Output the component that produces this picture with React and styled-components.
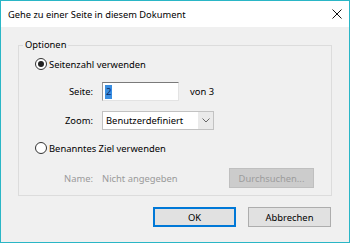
import React from "react";
import styled, { createGlobalStyle } from "styled-components";

const Global = createGlobalStyle`
  html, body {
    margin: 0;
    padding: 0;
    background: #f0f0f0;
  }
  * {
    box-sizing: border-box;
  }
`;

const Dialog = styled.div`
  width: 350px;
  height: 243px;
  border: 1px solid #2ab6c6;
  background: #f0f0f0;
  font-family: "Noto Sans", Lato, sans-serif;
  font-size: 9.4px;
  color: #000;
  display: flex;
  flex-direction: column;
`;

const TitleBar = styled.div`
  height: 26px;
  background: #fff;
  display: flex;
  align-items: center;
  justify-content: space-between;
  padding: 0 7px 0 7px;
  font-size: 9.3px;
`;

const Body = styled.div`
  padding: 11px 17px 0 17px;
  display: flex;
  flex-direction: column;
`;

const Group = styled.fieldset`
  margin: 0;
  border: 1px solid #dcdcdc;
  padding: 4px 0 7px 16px;
`;

const Legend = styled.legend`
  padding: 0 2px;
  margin-left: -12px;
  line-height: 14px;
`;

const RadioRow = styled.label`
  display: flex;
  align-items: center;
  height: 16px;
  margin-top: ${(p) => p.$top || 0}px;
  gap: 2px;
`;

const RadioCircle = styled.span`
  width: 12px;
  height: 12px;
  border-radius: 50%;
  border: 1px solid #333;
  background: #fff;
  display: flex;
  align-items: center;
  justify-content: center;

  &::after {
    content: "";
    width: 6px;
    height: 6px;
    border-radius: 50%;
    background: ${(p) => (p.$checked ? "#222" : "transparent")};
  }
`;

const FieldRow = styled.div`
  display: grid;
  grid-template-columns: 58px max-content max-content;
  justify-content: start;
  align-items: center;
  column-gap: 9px;
  margin-top: ${(p) => p.$top || 0}px;
`;

const FieldLabel = styled.span`
  text-align: right;
`;

const TextBox = styled.div`
  width: 77px;
  height: 19px;
  background: #fff;
  border: 1px solid #e3e3e3;
  border-top-color: #7a7a7a;
  border-left-color: #9a9a9a;
  display: flex;
  align-items: center;
  padding-left: 2px;
`;

const Selected = styled.span`
  background: #3a8ee0;
  color: #0b2a66;
  padding: 0 1px;
  line-height: 14px;
`;

const Select = styled.div`
  width: 112px;
  height: 19px;
  background: #fff;
  border: 1px solid #c2c2c2;
  display: flex;
  align-items: center;
  justify-content: space-between;
  padding-left: 3px;
`;

const Arrow = styled.span`
  width: 15px;
  height: 100%;
  background: #eaeaea;
  display: flex;
  align-items: center;
  justify-content: center;
`;

const Side = styled.span`
  margin-left: 2px;
`;

const NameRow = styled.div`
  display: flex;
  align-items: center;
  margin-top: 12px;
  color: #9a9a9a;
`;

const NameLabel = styled.span`
  width: 67px;
  padding-left: 29px;
`;

const Button = styled.button`
  font: inherit;
  width: ${(p) => p.$w || 83}px;
  height: 20px;
  padding: 0;
  background: ${(p) => (p.$disabled ? "#cccccc" : "#e1e1e1")};
  color: ${(p) => (p.$disabled ? "#9c9c9c" : "#000")};
  border: 1px solid ${(p) => (p.$primary ? "#0078d7" : p.$disabled ? "#bfbfbf" : "#adadad")};
  box-shadow: ${(p) => (p.$primary ? "inset 0 0 0 1px #0078d7" : "none")};
`;

const BrowseButton = styled(Button)`
  margin-left: auto;
  margin-right: 17px;
`;

const Footer = styled.div`
  display: flex;
  justify-content: flex-end;
  gap: 12px;
  margin-top: 11px;
  padding-right: 1px;
`;

const CloseIcon = () => (
  <svg width="10" height="10" viewBox="0 0 10 10">
    <path d="M0.5 0.5 L9.5 9.5 M9.5 0.5 L0.5 9.5" stroke="#111" strokeWidth="1" />
  </svg>
);

const Chevron = () => (
  <svg width="8" height="5" viewBox="0 0 8 5">
    <path d="M0.5 0.5 L4 4 L7.5 0.5" stroke="#666" strokeWidth="1" fill="none" />
  </svg>
);

export default function App() {
  return (
    <>
      <Global />
      <Dialog>
        <TitleBar>
          <span>Gehe zu einer Seite in diesem Dokument</span>
          <CloseIcon />
        </TitleBar>
        <Body>
          <Group>
            <Legend>Optionen</Legend>
            <RadioRow>
              <RadioCircle $checked />
              <span>Seitenzahl verwenden</span>
            </RadioRow>
            <FieldRow $top={10}>
              <FieldLabel>Seite:</FieldLabel>
              <TextBox>
                <Selected>2</Selected>
              </TextBox>
              <Side>von 3</Side>
            </FieldRow>
            <FieldRow $top={10}>
              <FieldLabel>Zoom:</FieldLabel>
              <Select>
                <span>Benutzerdefiniert</span>
                <Arrow>
                  <Chevron />
                </Arrow>
              </Select>
            </FieldRow>
            <RadioRow $top={10}>
              <RadioCircle />
              <span>Benanntes Ziel verwenden</span>
            </RadioRow>
            <NameRow>
              <NameLabel>Name:</NameLabel>
              <span>Nicht angegeben</span>
              <BrowseButton $disabled $w={85}>
                Durchsuchen...
              </BrowseButton>
            </NameRow>
          </Group>
          <Footer>
            <Button $primary>OK</Button>
            <Button>Abbrechen</Button>
          </Footer>
        </Body>
      </Dialog>
    </>
  );
}
